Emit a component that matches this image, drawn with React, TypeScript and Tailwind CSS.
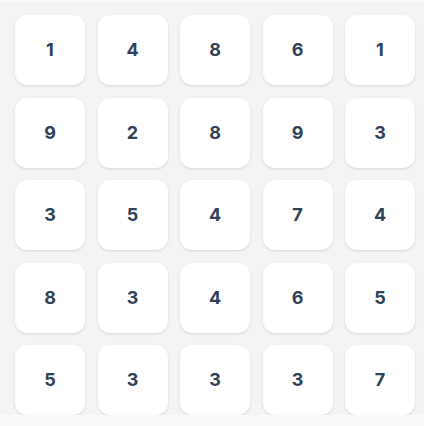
const rows = [
  [1, 4, 8, 6, 1],
  [9, 2, 8, 9, 3],
  [3, 5, 4, 7, 4],
  [8, 3, 4, 6, 5],
  [5, 3, 3, 3, 7],
]

export default function App() {
  return (
    <div className="h-[426px] w-[424px] bg-gray-50 pt-[2px] font-['Inter',sans-serif]">
      <div className="h-[413px] overflow-hidden bg-gray-100 pl-[15px] pt-[13px]">
        <div className="grid w-[400px] grid-cols-5 gap-[12.5px]">
          {rows.flat().map((n, i) => (
            <div
              key={i}
              className="flex h-[70px] w-[70px] items-center justify-center rounded-xl bg-white text-lg font-bold text-slate-700 shadow-sm"
            >
              {n}
            </div>
          ))}
        </div>
      </div>
    </div>
  )
}
